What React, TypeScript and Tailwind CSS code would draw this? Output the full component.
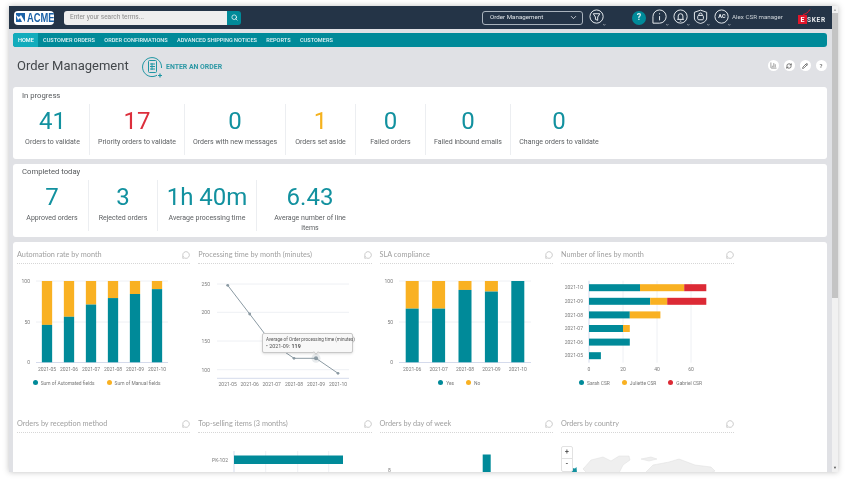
import { Search, ChevronDown, MessageCircle, RefreshCw, Pencil, BarChart3 } from 'lucide-react'

const TEAL = '#008a99'
const AMBER = '#f9b122'
const RED = '#dc2a35'
const GRID = '#eef0f4'
const AXIS = '#d5dbec'
const LABEL = '#7b7b7b'

const inProgress = [
  { value: '41', label: 'Orders to validate', color: 'text-[#12919f]', width: 'w-[74px]' },
  { value: '17', label: 'Priority orders to validate', color: 'text-[#dc2f3c]', width: 'w-[95px]' },
  { value: '0', label: 'Orders with new messages', color: 'text-[#12919f]', width: 'w-[101px]' },
  { value: '1', label: 'Orders set aside', color: 'text-[#f5b21e]', width: 'w-[70px]' },
  { value: '0', label: 'Failed orders', color: 'text-[#12919f]', width: 'w-[70px]' },
  { value: '0', label: 'Failed inbound emails', color: 'text-[#12919f]', width: 'w-[85px]' },
  { value: '0', label: 'Change orders to validate', color: 'text-[#12919f]', width: 'w-[96px]' },
]

const completed = [
  { value: '7', label: 'Approved orders', width: 'w-[73px]' },
  { value: '3', label: 'Rejected orders', width: 'w-[69px]' },
  { value: '1h 40m', label: 'Average processing time', width: 'w-[99px]' },
  { value: '6.43', label: 'Average number of line items', width: 'w-[106px] px-[12px]' },
]

const navItems = ['CUSTOMER ORDERS', 'ORDER CONFIRMATIONS', 'ADVANCED SHIPPING NOTICES', 'REPORTS', 'CUSTOMERS']

// header icons share a 18 unit box: the glyph in the top left, the small caret in the corner
function HeaderIcon({ children, className }: { children: React.ReactNode; className: string }) {
  return (
    <svg width="17" height="17" viewBox="0 0 18 18" fill="none" stroke="#eef2f5" strokeWidth="1" className={`shrink-0 ${className}`}>
      {children}
      <path d="M15.2 16.2l1 1 1-1" strokeWidth="0.7" />
    </svg>
  )
}

function Header() {
  return (
    <header className="flex h-[23px] shrink-0 items-center bg-[#243447] pl-[5px]">
      <div className="flex h-[14px] w-[40px] items-center overflow-hidden rounded-[4px] bg-white pl-[2px]">
        <svg width="9" height="9" viewBox="0 0 9 9" className="shrink-0">
          <rect width="9" height="9" fill="#1b62a8" />
          <path d="M0 2 3 4 5 2 9 9H6L4 5 2 7z" fill="#fff" />
        </svg>
        <span className="ml-[2px] origin-left scale-x-[0.78] text-[12px] font-black leading-none text-[#1b62a8] [font-family:'Liberation_Sans',sans-serif]">ACME</span>
      </div>
      <div className="ml-[10px] flex h-[14px] w-[177px] overflow-hidden rounded-[3px]">
        <div className="flex flex-1 items-center bg-[#eeeeee] pl-[6px] text-[6.5px] text-[#8b8b8b]">Enter your search terms...</div>
        <div className="flex w-[14px] items-center justify-center bg-[#008a99]">
          <Search size={7} color="#fff" strokeWidth={2.5} />
        </div>
      </div>
      <div className="ml-[241px] flex h-[14px] w-[101px] shrink-0 items-center justify-between rounded-[3px] border border-[#a9b3bd] pl-[7px] pr-[4px] text-[6.2px] text-[#dfe4e8]">
        Order Management
        <ChevronDown size={9} color="#eef2f5" />
      </div>
      <HeaderIcon className="ml-[6.4px]">
        <circle cx="8" cy="8" r="7" />
        <path d="M4.5 5h7L9.2 8.5V12L6.8 11V8.5z" />
      </HeaderIcon>
      <div className="ml-[25.6px] flex h-[14px] w-[14px] shrink-0 items-center justify-center rounded-full bg-[#008a99] text-[9px] font-bold text-[#dff2f4]">?</div>
      <HeaderIcon className="ml-[6.4px]">
        <path d="M1 15V8a7 7 0 1 1 7 7z" />
        <path d="M8 7.5V12M8 4.5v1.2" />
      </HeaderIcon>
      <HeaderIcon className="ml-[3.7px]">
        <circle cx="8" cy="8" r="7" />
        <path d="M4.5 11h7M5.500 11V7.500a2.500 2.500 0 0 1 5 0V11M7.200 12.800h1.600" />
      </HeaderIcon>
      <HeaderIcon className="ml-[3.4px]">
        <path d="M1.500 3.500 8 1.200l6.500 2.300v6c0 3-3 5-6.500 5.800-3.500-.8-6.500-2.800-6.500-5.800z" />
        <rect x="5" y="6.800" width="6" height="4.600" rx="1.200" />
        <path d="M6.300 6.800V6a1.700 1.700 0 0 1 3.400 0v.8" />
      </HeaderIcon>
      <div className="relative ml-[4px] h-[17px] w-[17px] shrink-0">
        <HeaderIcon className="">
          <circle cx="8" cy="8" r="7" />
        </HeaderIcon>
        <span className="absolute left-0 top-0 flex h-[15px] w-[15px] items-center justify-center text-[5.5px] font-bold text-[#eef2f5]">AC</span>
      </div>
      <span className="ml-[0.6px] w-[50px] shrink-0 whitespace-nowrap text-[6.2px] text-[#cfd5da]">Alex CSR manager</span>
      <div className="relative ml-[16px] flex items-end pt-[3px]">
        <svg width="8" height="6" viewBox="0 0 8 6" fill="none" className="absolute left-[5px] top-[-3px]">
          <path d="M0 5.500C3 5 5 3.500 7 .5" stroke="#e0162b" strokeWidth="1" />
        </svg>
        <span className="flex h-[9px] w-[9px] items-end justify-center bg-[#e0162b] text-[7px] font-bold leading-[7px] text-white">E</span>
        <span className="text-[6.5px] font-bold leading-[7px] tracking-[0.7px] text-[#e8ebee]">SKER</span>
      </div>
    </header>
  )
}

function Nav() {
  return (
    <nav className="ml-[4px] mr-[5.5px] mt-[4.3px] flex h-[14px] shrink-0 overflow-hidden rounded-[3px] bg-[#008a99] text-[5.6px] font-medium leading-[14px] text-[#dff2f4]">
      <span className="w-[25px] bg-[#12acbc] pl-[5px] text-white">HOME</span>
      <div className="ml-[5px] flex gap-[9.4px]">
        {navItems.map((item) => (
          <span key={item}>{item}</span>
        ))}
      </div>
    </nav>
  )
}

function RoundButton({ children }: { children: React.ReactNode }) {
  return <span className="flex h-[11px] w-[11px] items-center justify-center rounded-full bg-white text-[6px] font-bold text-[#777]">{children}</span>
}

function TitleBar() {
  return (
    <div className="flex h-[40px] shrink-0 items-center pl-[8px] pr-[5.5px]">
      <h1 className="mb-[3px] w-[125px] shrink-0 text-[13px] text-[#43474b]">Order Management</h1>
      <svg width="22" height="22" viewBox="0 0 22 22" fill="none" stroke="#1f96a3" strokeWidth="1" className="shrink-0">
        <path d="M15 19.2A9.500 9.500 0 1 1 19.500 12" />
        <rect x="6.500" y="4.500" width="8" height="12" rx="1" />
        <path d="M8 8h5M8 10.500h5M8 13h5M10 7v7" />
        <path d="M18 17.500v4M16 19.500h4" strokeWidth="1.200" />
      </svg>
      <span className="ml-[2px] text-[6.9px] font-bold text-[#2d98a5]">ENTER AN ORDER</span>
      <div className="mb-[3px] ml-auto flex items-center gap-[5px]">
        <RoundButton><BarChart3 size={7} color="#666" /></RoundButton>
        <RoundButton><RefreshCw size={6} color="#555" strokeWidth={3} /></RoundButton>
        <RoundButton><Pencil size={6} color="#555" strokeWidth={3} /></RoundButton>
        <RoundButton>?</RoundButton>
      </div>
    </div>
  )
}

function Kpi({ value, label, color, width }: { value: string; label: string; color: string; width: string }) {
  return (
    <div className={`${width} shrink-0 pt-[3px] text-center`}>
      <div className={`text-[24px] leading-[28px] ${color}`}>{value}</div>
      <div className="mt-[3px] text-[7px] leading-[9.6px] text-[#5d6063]">{label}</div>
    </div>
  )
}

function KpiCard({ title, className, children }: { title: string; className: string; children: React.ReactNode }) {
  return (
    <section className={`ml-[4px] mr-[5.5px] shrink-0 rounded-[3px] bg-white pl-[3px] ${className}`}>
      <h2 className="pl-[6px] pt-[2.5px] text-[7.7px] leading-[11px] text-[#55585b]">{title}</h2>
      <div className="mt-[3px] flex h-[51px] divide-x divide-[#eceef1]">{children}</div>
    </section>
  )
}

function ChartTitle({ title }: { title: string }) {
  return (
    <div className="flex h-[14px] items-start justify-between border-b border-dotted border-[#d6d6d6] text-[7.3px] leading-[10px] text-[#a0a0a0] [font-family:Lato,sans-serif]">
      {title}
      <MessageCircle size={8} color="#9a9a9a" strokeWidth={1.5} className="mt-[1px]" />
    </div>
  )
}

function Legend({ items }: { items: [string, string][] }) {
  return (
    <div className="mt-[4px] flex justify-center gap-[12px] pr-[14px] text-[4.9px] leading-[6px] text-[#777]">
      {items.map(([name, color]) => (
        <span key={name} className="flex items-center gap-[3px]">
          <span className="h-[5px] w-[5px] rounded-full" style={{ background: color }} />
          {name}
        </span>
      ))}
    </div>
  )
}

function StackedChart({ months, values, barW }: { months: string[]; values: number[]; barW: number }) {
  const x0 = 19
  const x1 = 151
  const step = (x1 - x0) / months.length
  return (
    <svg width="172" height="112" viewBox="0 0 172 112" fontFamily="Roboto" fontSize="5" fill={LABEL} className="block">
      <line x1={x0} x2={x1} y1="17" y2="17" stroke={GRID} />
      <line x1={x0} x2={x1} y1="58" y2="58" stroke={GRID} />
      <line x1={x0} x2={x1} y1="98.5" y2="98.5" stroke={AXIS} />
      {['100', '50', '0'].map((t, i) => (
        <text key={t} x={x0 - 6} y={19 + i * 40.7} textAnchor="end">{t}</text>
      ))}
      {months.map((m, i) => {
        const cx = x0 + step * (i + 0.5)
        const h = values[i] * 0.813
        return (
          <g key={m}>
            <rect x={cx - barW / 2} y={17} width={barW} height={81.3 - h} fill={AMBER} />
            <rect x={cx - barW / 2} y={98.3 - h} width={barW} height={h} fill={TEAL} />
            <text x={cx} y="106.5" textAnchor="middle">{m}</text>
          </g>
        )
      })}
    </svg>
  )
}

function LineChart() {
  const months = ['2021-05', '2021-06', '2021-07', '2021-08', '2021-09', '2021-10']
  const pts = [[29.7, 21.3], [51.7, 50], [73.7, 79], [96, 94.3], [118, 94.3], [140, 109.3]]
  return (
    <div className="relative">
      <svg width="172" height="125" viewBox="0 0 172 125" fontFamily="Roboto" fontSize="5" fill={LABEL} className="block">
        {[20, 48.3, 77, 105.7].map((y) => (
          <line key={y} x1="19" x2="151" y1={y} y2={y} stroke={GRID} />
        ))}
        <line x1="19" x2="151" y1="114.3" y2="114.3" stroke={AXIS} />
        {['250', '200', '150', '100'].map((t, i) => (
          <text key={t} x="12" y={21.7 + i * 28.6} textAnchor="end">{t}</text>
        ))}
        {months.map((m, i) => (
          <text key={m} x={pts[i][0]} y="122" textAnchor="middle">{m}</text>
        ))}
        <polyline points={pts.map((p) => p.join(',')).join(' ')} fill="none" stroke="#8b9aa3" strokeWidth="1" />
        {pts.map((p) => (
          <circle key={p[0]} cx={p[0]} cy={p[1]} r="1.4" fill="#8b9aa3" />
        ))}
        <circle cx="118" cy="94.3" r="4.5" fill="#8b9aa3" opacity="0.2" />
        <circle cx="118" cy="94.3" r="2" fill="#8b9aa3" />
      </svg>
      <div className="absolute left-[63.7px] top-[68.7px] h-[20px] w-[91px] rounded-[2px] border border-[#c8c8c8] bg-[#f8f8f8] pl-[3px] pt-[3px] text-[#555] shadow-sm">
        <div className="whitespace-nowrap text-[4.6px] leading-[6px]">Average of Order processing time (minutes)</div>
        <div className="text-[5.4px] leading-[7px]">• 2021-09: <b>119</b></div>
        <span className="absolute bottom-[-2.5px] left-[51px] h-[4px] w-[4px] rotate-45 border-b border-r border-[#c8c8c8] bg-[#f8f8f8]" />
      </div>
    </div>
  )
}

function LinesChart() {
  const rows: [string, number, number, number][] = [
    ['2021-10', 30, 26, 13],
    ['2021-09', 36, 10, 23],
    ['2021-08', 24, 18, 0],
    ['2021-07', 20, 4, 0],
    ['2021-06', 24, 0, 0],
    ['2021-05', 7, 0, 0],
  ]
  const s = 1.7
  return (
    <svg width="172" height="112" viewBox="0 0 172 112" fontFamily="Roboto" fontSize="5" fill={LABEL} className="block">
      {[0, 20, 40, 60].map((t) => (
        <g key={t}>
          <line x1={28 + t * s} x2={28 + t * s} y1="16.7" y2="98.7" stroke={t ? GRID : AXIS} />
          <text x={28 + t * s} y="106.7" textAnchor="middle">{t}</text>
        </g>
      ))}
      {rows.map(([m, a, b, c], i) => (
        <g key={m}>
          <text x="22" y={25.4 + i * 13.6} textAnchor="end">{m}</text>
          <rect x="28" y={20.2 + i * 13.6} width={a * s} height="7" fill={TEAL} />
          <rect x={28 + a * s} y={20.2 + i * 13.6} width={b * s} height="7" fill={AMBER} />
          <rect x={28 + (a + b) * s} y={20.2 + i * 13.6} width={c * s} height="7" fill={RED} />
        </g>
      ))}
    </svg>
  )
}

function ChartCell({ title, children }: { title: string; children?: React.ReactNode }) {
  return (
    <div className="w-[173.3px] shrink-0">
      <ChartTitle title={title} />
      {children}
    </div>
  )
}

function MapStub() {
  return (
    <div className="relative">
      <div className="absolute left-0 top-[13px] w-[12px] overflow-hidden rounded-[2px] border border-[#e2e2e2] bg-white text-center text-[7px] font-bold leading-[11.5px] text-[#555]">
        <div className="border-b border-[#e2e2e2]">+</div>
        <div>-</div>
      </div>
      <svg width="172" height="40" viewBox="0 0 172 40" fill="#efefef" stroke="#dedede" strokeWidth="0.5" className="block">
        <path d="M22 36 30 27 42 24 50 28 58 23 68 23 69 27 62 32 58 40 26 40Z" />
        <path d="M80 26 90 24 96 26 88 28Z" />
        <path d="M84 40 92 32 108 29 118 26 134 32 150 34 154 38 150 40Z" />
        <path d="M8 34.5 14 35.5 15.5 34 16 40 8 40Z" fill="#12919f" stroke="none" />
      </svg>
    </div>
  )
}

export default function App() {
  const months = ['2021-05', '2021-06', '2021-07', '2021-08', '2021-09', '2021-10']
  return (
    <div className="h-[484px] w-[847px] overflow-hidden bg-white pl-[9px] pt-[6px] blur-[0.35px] [font-family:Roboto,sans-serif]">
      <div className="flex h-[466px] w-[829px] overflow-hidden shadow-[0_0_6px_rgba(0,0,0,0.25)]">
        <main className="flex w-[823px] shrink-0 flex-col overflow-hidden bg-[#e0e1e5]">
          <Header />
          <Nav />
          <TitleBar />
          <KpiCard title="In progress" className="h-[72px]">
            {inProgress.map((k) => (
              <Kpi key={k.label} {...k} />
            ))}
          </KpiCard>
          <KpiCard title="Completed today" className="mt-[4.7px] h-[73.3px]">
            {completed.map((k) => (
              <Kpi key={k.label} {...k} color="text-[#12919f]" />
            ))}
          </KpiCard>
          <section className="ml-[4px] mr-[5.5px] mt-[5px] min-h-0 flex-1 overflow-hidden rounded-t-[3px] bg-white pl-[4px] pt-[7.7px]">
            <div className="flex h-[169px] gap-[8px]">
              <ChartCell title="Automation rate by month">
                <StackedChart months={months} values={[46, 56, 71, 79, 84, 90]} barW={10.3} />
                <Legend items={[['Sum of Automated fields', TEAL], ['Sum of Manual fields', AMBER]]} />
              </ChartCell>
              <ChartCell title="Processing time by month (minutes)">
                <LineChart />
              </ChartCell>
              <ChartCell title="SLA compliance">
                <StackedChart months={months.slice(1)} values={[66, 66, 89, 87, 100]} barW={13} />
                <Legend items={[['Yes', TEAL], ['No', AMBER]]} />
              </ChartCell>
              <ChartCell title="Number of lines by month">
                <LinesChart />
                <Legend items={[['Sarah CSR', TEAL], ['Juliette CSR', AMBER], ['Gabriel CSR', RED]]} />
              </ChartCell>
            </div>
            <div className="flex gap-[8px]">
              <ChartCell title="Orders by reception method" />
              <ChartCell title="Top-selling items (3 months)">
                <svg width="172" height="40" viewBox="0 0 172 40" fontFamily="Roboto" fontSize="5" fill={LABEL} className="block">
                  {[36, 67.7, 99.7, 130.7].map((x) => (
                    <line key={x} x1={x} x2={x} y1="18" y2="40" stroke={x === 36 ? AXIS : GRID} />
                  ))}
                  <text x="30" y="28.5" textAnchor="end">PK-102</text>
                  <rect x="36" y="22.5" width="109" height="8.5" fill={TEAL} />
                </svg>
              </ChartCell>
              <ChartCell title="Orders by day of week">
                <svg width="172" height="40" viewBox="0 0 172 40" fontFamily="Roboto" fontSize="5" fill={LABEL} className="block">
                  <text x="8" y="38.5">8</text>
                  <rect x="102.7" y="21.5" width="8" height="20" fill={TEAL} />
                </svg>
              </ChartCell>
              <ChartCell title="Orders by country"><MapStub /></ChartCell>
            </div>
          </section>
        </main>
        <aside className="flex w-[6px] shrink-0 flex-col bg-[#f1f1f1]">
          <div className="mx-auto mt-[2px] text-[4px] leading-[4px] text-[#aaa]">▲</div>
          <div className="mt-[1px] h-[285px] bg-[#c4c4c4]" />
          <div className="mx-auto mb-[2px] mt-auto text-[4px] leading-[4px] text-[#555]">▼</div>
        </aside>
      </div>
    </div>
  )
}
